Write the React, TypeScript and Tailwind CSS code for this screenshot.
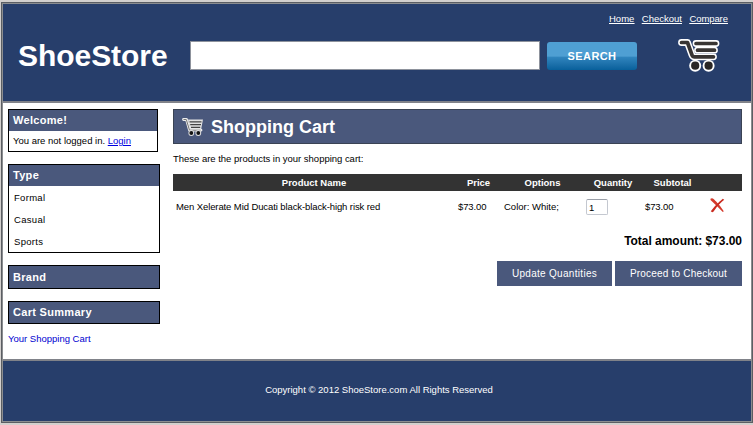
import type { ReactNode } from "react";

function CartIcon({ className }: { className: string }) {
  const frame = "M3.5 4.5H9.5L14 17Q14.7 18.8 16.5 18.8H35.5";
  const bars = "M18 5.5H38M19.5 12.2H36.5";
  return (
    <svg viewBox="0 0 42 34" className={className} fill="none" strokeLinecap="round" strokeLinejoin="round">
      <g stroke="#fff" strokeWidth="6.8">
        <path d={frame} />
        <path d={bars} />
      </g>
      <circle cx="17.2" cy="27.7" r="6" fill="#fff" />
      <circle cx="30.6" cy="27.7" r="6" fill="#fff" />
      <g stroke="#383533" strokeWidth="3.7">
        <path d={frame} />
        <path d={bars} />
      </g>
      <circle cx="17.2" cy="27.7" r="4.1" fill="#2a2726" />
      <circle cx="30.6" cy="27.7" r="4.1" fill="#2a2726" />
    </svg>
  );
}

function SmallCart() {
  return (
    <svg viewBox="0 0 22 18" className="h-[18px] w-[22px]" fill="none" strokeLinejoin="round">
      <path d="M6 1.5H21L19 12H8.5Z" fill="#e2e2e2" />
      <path d="M1.5 1.5H4.5L7.5 12.2H19" stroke="#eee" strokeWidth="2.8" strokeLinecap="round" />
      <path d="M1.5 1.5H4.3L7.5 12.2H18.5" stroke="#777" strokeWidth="1" />
      <path d="M7.5 3.8H19.5M8.2 6.6H19M9 9.4H18.2" stroke="#444" strokeWidth="1.3" />
      <circle cx="9.3" cy="15" r="2.9" fill="#ddd" />
      <circle cx="16.3" cy="15" r="2.9" fill="#ddd" />
      <circle cx="9.3" cy="15" r="1.9" fill="#111" />
      <circle cx="16.3" cy="15" r="1.9" fill="#111" />
    </svg>
  );
}

function PanelTitle({ children }: { children: ReactNode }) {
  return <h2 className="h-[21px] bg-[#4a587c] pl-1 text-[11px] leading-[21px] font-bold tracking-[0.3px] text-white">{children}</h2>;
}

export default function App() {
  return (
    <div className="h-[425px] w-[753px] overflow-hidden bg-[#d3d0ce] pt-[2px] pl-px font-['Liberation_Sans',Arial,sans-serif] text-[9.5px] whitespace-nowrap text-black">
      <div className="flex h-[421px] w-[752px] flex-col border border-[#5b5e63]">
        <div className="flex h-full flex-col border border-[#8b8d90] bg-white">
          <header className="flex h-[99px] shrink-0 border-b-2 border-[#808289] bg-[#273e6b] text-white">
            <h1 className="mt-[32px] ml-[15px] w-[172px] text-[30px] leading-[40px] font-bold tracking-[-0.05px]">ShoeStore</h1>
            <input aria-label="Search products" className="mt-[37px] h-[29px] w-[350px] border border-[#8d929c] bg-white px-2 text-sm text-black outline-none" />
            <button className="mt-[38px] ml-[7px] h-[28px] w-[90px] rounded-[3px] bg-linear-to-b from-[#4f9fd3] from-50% via-[#2f84bd] via-55% to-[#07609b] text-[11px] font-bold tracking-[0.4px]">SEARCH</button>
            <div className="flex flex-1 flex-col">
              <nav className="mt-[8px] -ml-[28px] flex gap-[7.5px] leading-[14px] underline">
                <a href="#home">Home</a>
                <a href="#checkout">Checkout</a>
                <a href="#compare" className="tracking-[-0.1px]">Compare</a>
              </nav>
              <CartIcon className="mt-[12px] ml-[41px] h-[34px] w-[42px]" />
            </div>
          </header>

          <main className="flex h-[256px] shrink-0 pt-[6px] pl-[5px]">
            <aside className="w-[165px] shrink-0">
              <section className="h-[43px] w-[150px] border border-black">
                <PanelTitle>Welcome!</PanelTitle>
                <p className="pl-1 leading-[20px]">
                  You are not logged in. <a href="#login" className="text-[#0000e0] underline">Login</a>
                </p>
              </section>
              <section className="mt-3 h-[89px] w-[152px] border border-black">
                <PanelTitle>Type</PanelTitle>
                <ul className="pt-[1px] pl-[5px] leading-[22px] tracking-[0.3px]">
                  <li>Formal</li>
                  <li>Casual</li>
                  <li>Sports</li>
                </ul>
              </section>
              <section className="mt-3 h-[24px] w-[152px] border border-black bg-[#4a587c] pt-px">
                <PanelTitle>Brand</PanelTitle>
              </section>
              <section className="mt-3 h-[23px] w-[152px] border border-black bg-[#4a587c]">
                <PanelTitle>Cart Summary</PanelTitle>
              </section>
              <a href="#cart" className="mt-[8px] block leading-[14px] text-[#0000d0]">Your Shopping Cart</a>
            </aside>

            <div className="w-[569px]">
              <div className="flex h-[35px] items-center border border-[#3a4354] bg-[#4a587c] pl-[8px]">
                <SmallCart />
                <h2 className="ml-[7px] text-[18px] leading-[22px] font-bold text-white">Shopping Cart</h2>
              </div>
              <p className="mt-[8px] leading-[14px] tracking-[-0.02px]">These are the products in your shopping cart:</p>
              <table className="mt-[8px] w-[569px] table-fixed border-collapse">
                <colgroup>
                  <col className="w-[282px]" /><col className="w-[47px]" /><col className="w-[81px]" /><col className="w-[60px]" /><col className="w-[59px]" /><col className="w-[40px]" />
                </colgroup>
                <thead className="bg-[#333] text-white">
                  <tr className="h-[17px]">
                    <th className="pt-px">Product Name</th><th className="pt-px">Price</th><th className="pt-px">Options</th><th className="pt-px">Quantity</th><th className="pt-px">Subtotal</th><th />
                  </tr>
                </thead>
                <tbody>
                  <tr className="h-[32px]">
                    <td className="pl-[3px] tracking-[-0.1px]">Men Xelerate Mid Ducati black-black-high risk red</td>
                    <td className="pl-[3px] tracking-[-0.1px]">$73.00</td>
                    <td className="pl-[2px]">Color: White;</td>
                    <td className="pl-[3px]"><input aria-label="Quantity" defaultValue="1" className="block h-4 w-[22px] rounded-[2px] border border-[#c4c8d0] border-t-[#9a9fa8] pl-[2px] outline-none" /></td>
                    <td className="pl-[2px] tracking-[-0.1px]">$73.00</td>
                    <td className="pl-[8px]">
                      <svg viewBox="0 0 15 15" className="-mt-[3px] h-[15px] w-[15px]" aria-label="Remove">
                        <path d="M.5.8Q2-.5 3.9 1.2Q9 6 13.8 13.2L12.8 14Q7 7.9.5 2Z" fill="#d43a2c" />
                        <path d="M12.8.8L14.2 1.8Q7.4 7 3.8 13.2Q2.2 15 .8 13.3Q6 6 12.8.8Z" fill="#c92b20" />
                      </svg>
                    </td>
                  </tr>
                </tbody>
              </table>
              <p className="mt-[10px] text-right text-[12px] leading-[16px] font-bold tracking-[-0.03px]">Total amount: $73.00</p>
              <div className="mt-[12px] flex justify-end gap-[3px] text-[10px] text-white">
                <button className="h-[25px] w-[115px] bg-[#4a587c] tracking-[0.3px]">Update Quantities</button>
                <button className="h-[25px] w-[127px] bg-[#4a587c] tracking-[0.2px]">Proceed to Checkout</button>
              </div>
            </div>
          </main>

          <footer className="flex flex-1 items-center justify-center border-t-2 border-[#808289] bg-[#273e6b] pb-[2px] pl-[4px] text-white">
            <p>Copyright © 2012 ShoeStore.com All Rights Reserved</p>
          </footer>
        </div>
      </div>
    </div>
  );
}
